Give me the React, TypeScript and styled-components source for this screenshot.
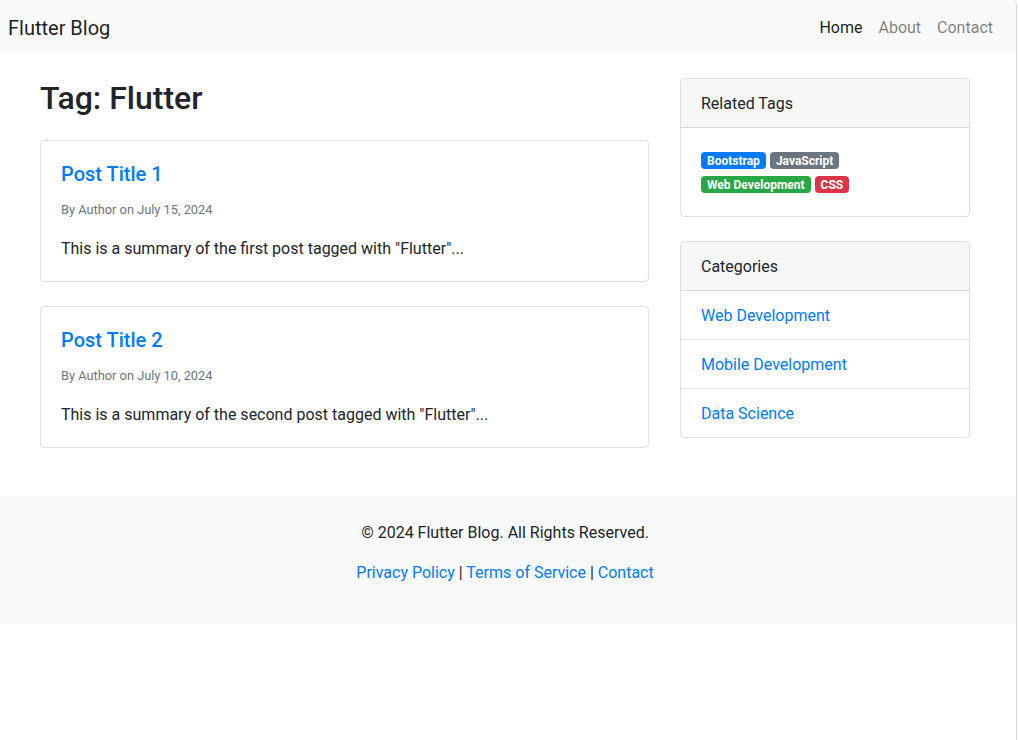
import React from "react";
import styled, { createGlobalStyle } from "styled-components";

const colors = {
  text: "#212529",
  muted: "#6c757d",
  link: "#007bff",
  light: "#f8f9fa",
  border: "rgba(0, 0, 0, 0.125)",
  cap: "rgba(0, 0, 0, 0.03)",
};

const Global = createGlobalStyle`
  body {
    margin: 0;
    font-family: Roboto, "Liberation Sans", Arial, sans-serif;
    font-size: 16px;
    line-height: 1.5;
    color: ${colors.text};
    background: #fff;
  }
  a { color: ${colors.link}; text-decoration: none; }
  p { margin: 0 0 16px; }
`;

const posts = [
  { id: 1, date: "July 15, 2024", summary: 'This is a summary of the first post tagged with "Flutter"...' },
  { id: 2, date: "July 10, 2024", summary: 'This is a summary of the second post tagged with "Flutter"...' },
];

// two tags per line, as the sidebar shows them
const tagRows = [
  [
    { label: "Bootstrap", color: "#007bff" },
    { label: "JavaScript", color: "#6c757d" },
  ],
  [
    { label: "Web Development", color: "#28a745" },
    { label: "CSS", color: "#dc3545" },
  ],
];

const categories = ["Web Development", "Mobile Development", "Data Science"];

function App() {
  return (
    <Frame>
      <Global />
      <Navbar>
        <Brand href="#">Flutter Blog</Brand>
        <NavList>
          <NavLink href="#" $active>Home</NavLink>
          <NavLink href="#">About</NavLink>
          <NavLink href="#">Contact</NavLink>
        </NavList>
      </Navbar>

      <Container>
        <Main>
          <section>
            <PageTitle>Tag: Flutter</PageTitle>
            {posts.map((post) => (
              <Card key={post.id}>
                <CardBody>
                  <PostTitle href="#">Post Title {post.id}</PostTitle>
                  <Meta>
                    <small>By Author on {post.date}</small>
                  </Meta>
                  <Summary>{post.summary}</Summary>
                </CardBody>
              </Card>
            ))}
          </section>

          <aside>
            <Card>
              <CardHeader>Related Tags</CardHeader>
              <CardBody>
                {tagRows.map((row, r) => (
                  <TagLine key={r}>
                    {row.map((tag) => (
                      <Badge key={tag.label} href="#" $bg={tag.color}>
                        {tag.label}
                      </Badge>
                    ))}
                  </TagLine>
                ))}
              </CardBody>
            </Card>
            <Card>
              <CardHeader>Categories</CardHeader>
              <ListGroup>
                {categories.map((c) => (
                  <ListItem key={c}>
                    <a href="#">{c}</a>
                  </ListItem>
                ))}
              </ListGroup>
            </Card>
          </aside>
        </Main>
      </Container>

      <Footer>
        <Container>
          <p>© 2024 Flutter Blog. All Rights Reserved.</p>
          <p>
            <a href="#">Privacy Policy</a> | <a href="#">Terms of Service</a> |{" "}
            <a href="#">Contact</a>
          </p>
        </Container>
      </Footer>
    </Frame>
  );
}

export default App;

const Frame = styled.div`
  width: 1016px;
  min-height: 740px;
  border-right: 1px solid #d6d6d6;
  border-top-right-radius: 6px;
  overflow: hidden;
`;

const Navbar = styled.nav`
  display: flex;
  align-items: center;
  justify-content: space-between;
  height: 54px;
  padding: 1px 15px 0 8px;
  box-sizing: border-box;
  background: ${colors.light};
`;

const Brand = styled.a`
  font-size: 20px;
  line-height: 30px;
  && { color: rgba(0, 0, 0, 0.9); }
`;

const NavList = styled.div`
  display: flex;
`;

const NavLink = styled.a<{ $active?: boolean }>`
  padding: 8px;
  line-height: 24px;
  && {
    color: ${({ $active }) => ($active ? "rgba(0, 0, 0, 0.9)" : "rgba(0, 0, 0, 0.5)")};
  }
`;

const Container = styled.div`
  width: 960px;
  box-sizing: border-box;
  padding: 0 15px;
  margin-left: 25px;
`;

const Main = styled.main`
  display: grid;
  grid-template-columns: 609px 290px;
  column-gap: 31px;
  padding: 24px 0;
  align-items: start;
`;

const PageTitle = styled.h1`
  margin: 0 0 24px;
  padding-top: 1px;
  height: 37px;
  font-size: 32px;
  font-weight: 500;
  line-height: 1.2;
`;

const Card = styled.div`
  border: 1px solid ${colors.border};
  border-radius: 4px;
  margin-bottom: 24px;
  overflow: hidden;
`;

const CardHeader = styled.div`
  padding: 13px 20px 11px;
  background: ${colors.cap};
  border-bottom: 1px solid ${colors.border};
`;

const CardBody = styled.div`
  padding: 20px;
`;

const PostTitle = styled.a`
  display: block;
  margin-bottom: 12px;
  padding-top: 1px;
  height: 23px;
  font-size: 20px;
  font-weight: 500;
  line-height: 1.2;
`;

const Meta = styled.p`
  color: ${colors.muted};
  small { font-size: 80%; }
`;

const Summary = styled.p`
  && { margin-bottom: 0; }
`;

const TagLine = styled.div`
  display: flex;
  align-items: center;
  gap: 4px;
  height: 24px;
  box-sizing: border-box;
  padding-top: 1px;
`;

const Badge = styled.a<{ $bg: string }>`
  display: inline-block;
  padding: 3px 6px 2px;
  font-size: 12px;
  font-weight: 700;
  line-height: 12px;
  border-radius: 4px;
  background: ${({ $bg }) => $bg};
  && { color: #fff; }
`;

const ListGroup = styled.ul`
  list-style: none;
  margin: 0;
  padding: 0;
`;

const ListItem = styled.li`
  padding: 13px 20px 11px;
  & + & { border-top: 1px solid ${colors.border}; }
`;

const Footer = styled.footer`
  padding: 25px 0 23px;
  background: ${colors.light};
  text-align: center;
`;
